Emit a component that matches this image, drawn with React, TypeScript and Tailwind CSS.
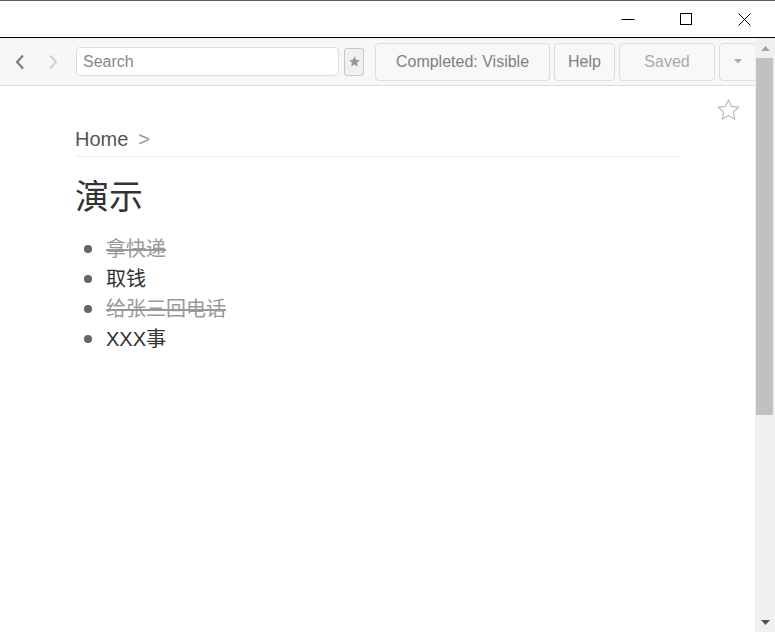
import React from 'react';

const font = { fontFamily: '"Liberation Sans", "Noto Sans CJK SC", sans-serif' };

const items = [
  { text: '拿快递', done: true },
  { text: '取钱', done: false },
  { text: '给张三回电话', done: true },
  { text: 'XXX事', done: false },
];

const TitleBar: React.FC = () => (
  <div className="flex h-[38px] justify-end border-t border-b border-t-[#5c5c5c] border-b-black bg-white pr-[2px]">
    <div className="flex w-[58px] items-center justify-center">
      <svg width="14" height="14" viewBox="0 0 14 14">
        <path d="M0.5 7.5H13.5" stroke="#000" strokeWidth="1" />
      </svg>
    </div>
    <div className="flex w-[58px] items-center justify-center">
      <svg width="12" height="12" viewBox="0 0 12 12">
        <rect x="0.5" y="0.5" width="11" height="11" fill="none" stroke="#000" strokeWidth="1" />
      </svg>
    </div>
    <div className="flex w-[58px] items-center justify-center">
      <svg width="13" height="13" viewBox="0 0 13 13">
        <path d="M0.5 0.5L12.5 12.5M12.5 0.5L0.5 12.5" stroke="#000" strokeWidth="1" />
      </svg>
    </div>
  </div>
);

const Toolbar: React.FC = () => (
  <div className="flex h-[48px] items-center overflow-hidden border-b border-[#dddddd] bg-[#f7f7f7]">
    <div className="ml-[15px] flex w-[10px] justify-center">
      <svg width="10" height="16" viewBox="0 0 10 16">
        <path d="M8 1.5L2 8l6 6.5" fill="none" stroke="#777" strokeWidth="2" />
      </svg>
    </div>
    <div className="ml-[23px] flex w-[10px] justify-center">
      <svg width="10" height="16" viewBox="0 0 10 16">
        <path d="M2 1.5L8 8l-6 6.5" fill="none" stroke="#d0d0d0" strokeWidth="2" />
      </svg>
    </div>
    <input
      className="ml-[18px] h-[29px] w-[263px] shrink-0 rounded-[4px] border border-[#dddddd] bg-white px-[6px] text-[16px] text-[#333] outline-none placeholder:text-[#888]"
      placeholder="Search"
    />
    <button className="ml-[5px] flex h-[28px] w-[20px] shrink-0 items-center justify-center rounded-[3px] border border-[#c8c8c8] bg-[#f0f0f0]">
      <svg width="13" height="13" viewBox="0 0 24 24">
        <path d="M12 2l2.9 6.9 7.1.6-5.4 4.7 1.6 7.1L12 17.5l-6.2 3.8 1.6-7.1L2 9.5l7.1-.6z" fill="#999" />
      </svg>
    </button>
    <button className="ml-[11px] flex h-[38px] w-[175px] shrink-0 items-center justify-center rounded-[4px] border border-[#dddddd] bg-[#f8f8f8] text-[16px] text-[#808080]">
      Completed: Visible
    </button>
    <button className="ml-[4px] flex h-[38px] w-[61px] shrink-0 items-center justify-center rounded-[4px] border border-[#dddddd] bg-[#f8f8f8] text-[16px] text-[#808080]">
      Help
    </button>
    <button className="ml-[4px] flex h-[38px] w-[96px] shrink-0 items-center justify-center rounded-[4px] border border-[#dddddd] bg-[#f8f8f8] text-[16px] text-[#aaa]">
      Saved
    </button>
    <button className="ml-[4px] flex h-[38px] w-[40px] shrink-0 items-center justify-start rounded-[4px] border border-[#dddddd] bg-[#f8f8f8] pl-[14px]">
      <svg width="8" height="5" viewBox="0 0 8 5">
        <path d="M0 0h8L4 4.5z" fill="#aaa" />
      </svg>
    </button>
  </div>
);

const Scrollbar: React.FC = () => (
  <div className="flex w-[20px] shrink-0 flex-col bg-[#f0f0f0]">
    <div className="flex h-[20px] items-center justify-center">
      <svg width="9" height="5" viewBox="0 0 9 5">
        <path d="M0 5h9L4.5 0z" fill="#a3a3a3" />
      </svg>
    </div>
    <div className="ml-px h-[357px] w-[17px] bg-[#c1c1c1]" />
    <div className="flex-1" />
    <div className="flex h-[20px] items-center justify-center">
      <svg width="9" height="5" viewBox="0 0 9 5">
        <path d="M0 0h9L4.5 5z" fill="#505050" />
      </svg>
    </div>
  </div>
);

const App: React.FC = () => {
  return (
    <div className="flex h-[632px] w-[775px] flex-col overflow-hidden bg-white" style={font}>
      <TitleBar />
      <div className="flex min-h-0 flex-1">
        <div className="relative flex min-w-0 flex-1 flex-col">
          <Toolbar />
          <div className="relative flex-1 bg-white">
            <svg className="absolute right-[14px] top-[12px]" width="25" height="24" viewBox="0 0 24 24">
              <path
                d="M12 1.8l3 6.6 7.2.8-5.4 4.9 1.5 7.1L12 17.6l-6.3 3.6 1.5-7.1L1.8 9.2 9 8.4z"
                fill="none"
                stroke="#bbb"
                strokeWidth="1.2"
                strokeLinejoin="round"
              />
            </svg>
            <div className="mx-auto w-[605px] pt-[39px]">
              <div className="h-[32px] border-b border-[#eeeeee] text-[20px] leading-[28px]">
                <span className="text-[#555]">Home</span>
                <span className="ml-[10px] text-[#999]">&gt;</span>
              </div>
              <h1 className="mt-[20px] text-[34px] font-normal leading-[40px] text-[#333]">演示</h1>
              <ul className="mt-[17px]">
                {items.map((item) => (
                  <li key={item.text} className="flex h-[30px] items-center text-[20px] leading-[30px]">
                    <span className="ml-[9px] h-[8px] w-[8px] rounded-full bg-[#666]" />
                    <span className={item.done ? 'ml-[14px] text-[#999] line-through' : 'ml-[14px] text-[#333]'}>
                      {item.text}
                    </span>
                  </li>
                ))}
              </ul>
            </div>
          </div>
        </div>
        <Scrollbar />
      </div>
    </div>
  );
};

export default App;
